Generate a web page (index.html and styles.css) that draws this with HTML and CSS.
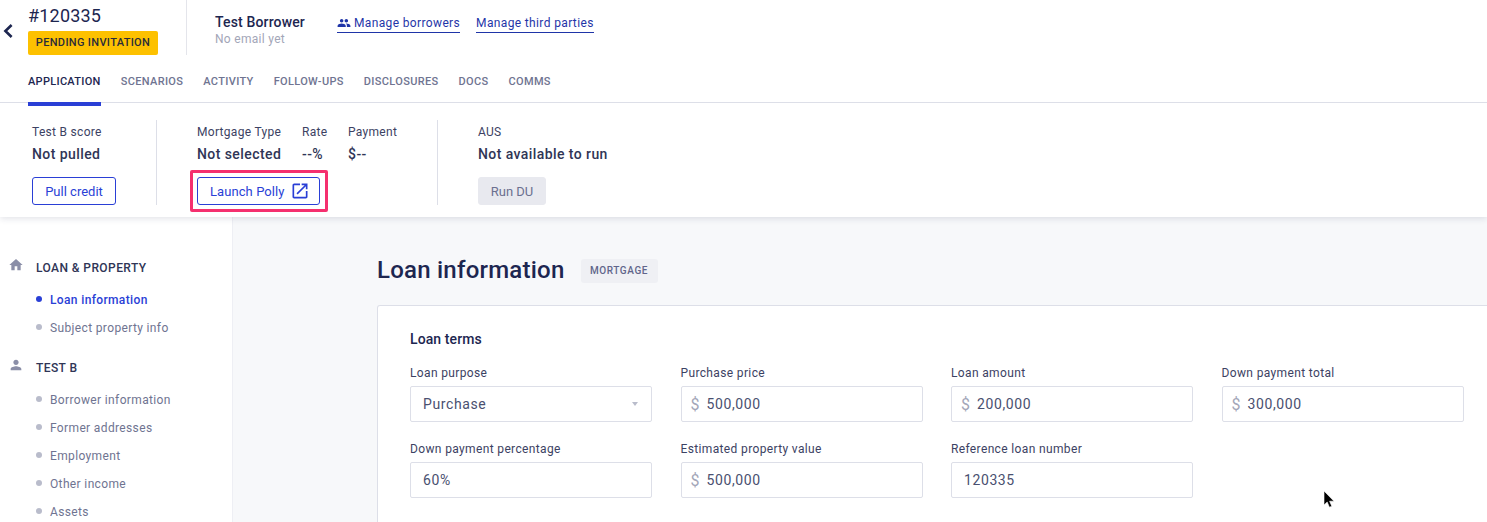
FILE: index.html
```html
<!DOCTYPE html>
<html>
	<head>
		<meta charset="utf-8">
		<title>Loan information</title>
		<link rel="stylesheet" href="styles.css">
	</head>
	<body>
		<header class="topbar">
			<div class="topRow">
				<a class="back">
					<svg viewBox="0 0 10 14" width="10" height="14"><path d="M8.6 1 2.4 7l6.2 6" fill="none" stroke="#1d2650" stroke-width="2.6"/></svg>
				</a>
				<div class="loanId">
					<div class="loanNum">#120335</div>
					<span class="status">PENDING INVITATION</span>
				</div>
				<div class="borrower">
					<div class="borrowerName">Test Borrower</div>
					<div class="borrowerMail">No email yet</div>
				</div>
				<a class="manage">
					<svg viewBox="0 0 24 24" width="14" height="14"><path fill="#1f35a8" d="M16 11c1.66 0 2.99-1.34 2.99-3S17.66 5 16 5c-1.66 0-3 1.34-3 3s1.34 3 3 3zm-8 0c1.66 0 2.99-1.34 2.99-3S9.66 5 8 5C6.34 5 5 6.34 5 8s1.34 3 3 3zm0 2c-2.33 0-7 1.17-7 3.5V19h14v-2.5c0-2.33-4.67-3.5-7-3.5zm8 0c-.29 0-.62.02-.97.05 1.16.84 1.97 1.97 1.97 3.45V19h6v-2.5c0-2.33-4.67-3.5-7-3.5z"/></svg>
					Manage borrowers
				</a>
				<a class="manage">Manage third parties</a>
			</div>
			<ul class="tabs">
				<li class="tab active">APPLICATION</li>
				<li class="tab">SCENARIOS</li>
				<li class="tab">ACTIVITY</li>
				<li class="tab">FOLLOW-UPS</li>
				<li class="tab">DISCLOSURES</li>
				<li class="tab">DOCS</li>
				<li class="tab">COMMS</li>
			</ul>
		</header>

		<section class="summary">
			<div class="group groupCredit">
				<div class="stats">
					<div class="stat"><div class="statLabel">Test B score</div><div class="statValue">Not pulled</div></div>
				</div>
				<button type="button" class="btn">Pull credit</button>
			</div>
			<div class="group groupMortgage">
				<div class="stats">
					<div class="stat statType"><div class="statLabel">Mortgage Type</div><div class="statValue">Not selected</div></div>
					<div class="stat statRate"><div class="statLabel">Rate</div><div class="statValue">--%</div></div>
					<div class="stat"><div class="statLabel">Payment</div><div class="statValue">$--</div></div>
				</div>
				<button type="button" class="btn btnPolly">
					Launch Polly
					<svg viewBox="0 0 24 24" width="20" height="20"><path fill="#2a3fd6" d="M19 19H5V5h7V3H5c-1.11 0-2 .9-2 2v14c0 1.1.89 2 2 2h14c1.1 0 2-.9 2-2v-7h-2v7zM14 3v2h3.59l-9.83 9.83 1.41 1.41L19 6.41V10h2V3h-7z"/></svg>
				</button>
			</div>
			<div class="group groupAus">
				<div class="stats">
					<div class="stat"><div class="statLabel">AUS</div><div class="statValue">Not available to run</div></div>
				</div>
				<button type="button" class="btn btnOff">Run DU</button>
			</div>
		</section>

		<div class="content">
			<nav class="sidebar">
				<div class="navHead">
					<svg viewBox="0 0 24 24" width="16" height="16"><path fill="#8b8fa8" d="M10 20v-6h4v6h5v-8h3L12 3 2 12h3v8z"/></svg>
					LOAN &amp; PROPERTY
				</div>
				<ul class="navList">
					<li class="navItem current">Loan information</li>
					<li class="navItem">Subject property info</li>
				</ul>
				<div class="navHead">
					<svg viewBox="0 0 24 24" width="16" height="16"><path fill="#8b8fa8" d="M12 12c2.21 0 4-1.79 4-4s-1.79-4-4-4-4 1.79-4 4 1.79 4 4 4zm0 2c-2.67 0-8 1.34-8 4v2h16v-2c0-2.66-5.33-4-8-4z"/></svg>
					TEST B
				</div>
				<ul class="navList">
					<li class="navItem">Borrower information</li>
					<li class="navItem">Former addresses</li>
					<li class="navItem">Employment</li>
					<li class="navItem">Other income</li>
					<li class="navItem">Assets</li>
				</ul>
			</nav>
			<main class="main">
				<div class="titleRow">
					<h1 class="title">Loan information</h1>
					<span class="tag">MORTGAGE</span>
				</div>
				<div class="card">
					<h2 class="cardTitle">Loan terms</h2>
					<div class="fields">
						<div class="field">
							<label class="fieldLabel">Loan purpose</label>
							<div class="input select">Purchase<span class="caret"></span></div>
						</div>
						<div class="field">
							<label class="fieldLabel">Purchase price</label>
							<div class="input money"><span class="dollar">$</span>500,000</div>
						</div>
						<div class="field">
							<label class="fieldLabel">Loan amount</label>
							<div class="input money"><span class="dollar">$</span>200,000</div>
						</div>
						<div class="field">
							<label class="fieldLabel">Down payment total</label>
							<div class="input money"><span class="dollar">$</span>300,000</div>
						</div>
						<div class="field">
							<label class="fieldLabel">Down payment percentage</label>
							<div class="input">60%</div>
						</div>
						<div class="field">
							<label class="fieldLabel">Estimated property value</label>
							<div class="input money"><span class="dollar">$</span>500,000</div>
						</div>
						<div class="field">
							<label class="fieldLabel">Reference loan number</label>
							<div class="input">120335</div>
						</div>
					</div>
				</div>
			</main>
		</div>

		<svg class="cursor" viewBox="0 0 12 19" width="12" height="19"><path d="M1 1v14l3.2-3 2.2 5.2 2.4-1-2.2-5H11z" fill="#000" stroke="#fff" stroke-width=".6"/></svg>
	</body>
</html>
```

FILE: styles.css
```css
*{
	margin: 0;
	padding: 0;
	box-sizing: border-box;
}
html, body{
	height: 522px;
	overflow: hidden;
}
body{
	position: relative;
	font-family: Roboto, "Liberation Sans", sans-serif;
	color: #1d2650;
	background-color: #fff;
}
ul{
	list-style: none;
}

/* top bar */
.topbar{
	position: relative;
	z-index: 3;
	height: 103px;
	border-bottom: 1px solid #dddfe8;
	background-color: #fff;
}
.topRow{
	height: 70px;
	display: flex;
	align-items: flex-start;
}
.back{
	width: 28px;
	padding: 24px 0 0 3px;
	line-height: 0;
}
.loanId{
	width: 159px;
	height: 55px;
	padding-top: 5px;
	margin-right: 28px;
	border-right: 1px solid #e4e5eb;
}
.loanNum{
	font-size: 18px;
	line-height: 21px;
	letter-spacing: 0.2px;
}
.status{
	display: inline-block;
	width: 130px;
	height: 24px;
	margin-top: 5px;
	line-height: 24px;
	text-align: center;
	font-size: 11px;
	font-weight: 500;
	letter-spacing: 0.33px;
	color: #2a2c3a;
	background-color: #fdc100;
	border-radius: 2px;
}
.borrower{
	width: 122px;
	padding-top: 14px;
}
.borrowerName{
	font-size: 14px;
	line-height: 17px;
	font-weight: 500;
	letter-spacing: 0.15px;
}
.borrowerMail{
	margin-top: 1px;
	font-size: 12px;
	line-height: 15px;
	letter-spacing: 0.3px;
	color: #a3a6b8;
}
.manage{
	display: flex;
	align-items: center;
	gap: 3px;
	height: 19px;
	margin-top: 14px;
	margin-right: 16px;
	font-size: 12px;
	letter-spacing: 0.36px;
	color: #1f35a8;
	border-bottom: 1px solid #1f35a8;
}
.tabs{
	display: flex;
	gap: 20px;
	padding-left: 28px;
}
.tab{
	height: 36px;
	padding-top: 5px;
	font-size: 11px;
	line-height: 13px;
	font-weight: 500;
	letter-spacing: 0.34px;
	color: #6f7491;
}
.active{
	color: #1d2650;
	letter-spacing: 0.3px;
	border-bottom: 4px solid #2a3fd6;
}

/* summary bar */
.summary{
	position: relative;
	z-index: 2;
	height: 114px;
	padding-top: 17px;
	display: flex;
	background-color: #fff;
	box-shadow: 0 2px 6px rgba(29, 38, 80, 0.12);
}
.group{
	height: 85px;
	padding-top: 5px;
	border-right: 1px solid #dddfe8;
}
.groupCredit{
	width: 157px;
	padding-left: 32px;
}
.groupMortgage{
	width: 281px;
	padding-left: 40px;
}
.groupAus{
	padding-left: 40px;
	border-right: 0;
}
.stats{
	display: flex;
}
.statType{
	width: 105px;
}
.statRate{
	width: 46px;
}
.statLabel{
	font-size: 12px;
	line-height: 15px;
	letter-spacing: 0.3px;
	color: #3c4263;
}
.statValue{
	margin-top: 6px;
	font-size: 14px;
	line-height: 16px;
	font-weight: 500;
	letter-spacing: 0.42px;
	color: #2f3556;
}
.btn{
	display: flex;
	align-items: center;
	justify-content: center;
	height: 28px;
	width: 84px;
	margin-top: 15px;
	font-family: inherit;
	font-size: 13px;
	color: #2a3fd6;
	background-color: #fff;
	border: 1px solid #2a3fd6;
	border-radius: 3px;
}
.btnPolly{
	position: relative;
	justify-content: flex-start;
	width: 123px;
	padding-left: 12px;
	gap: 5px;
	letter-spacing: 0.08px;
}
.btnPolly::after{
	content: "";
	position: absolute;
	left: -8px;
	right: -9px;
	top: -8px;
	bottom: -8px;
	border: 3px solid #f5306f;
	border-radius: 2px;
}
.btnOff{
	width: 68px;
	color: #6b7090;
	background-color: #e8e9ef;
	border-color: #e8e9ef;
}

/* lower part */
.content{
	display: flex;
	height: 305px;
	overflow: hidden;
}
.sidebar{
	width: 233px;
	padding-top: 39px;
	background-color: #fff;
	border-right: 1px solid #eeeff4;
}
.navHead{
	position: relative;
	height: 24px;
	padding-left: 36px;
	font-size: 12px;
	line-height: 24px;
	font-weight: 500;
	letter-spacing: 0.42px;
	color: #2f3556;
}
.navHead svg{
	position: absolute;
	left: 8px;
	top: 1px;
}
.navList{
	padding: 6px 0 14px 36px;
}
.navItem{
	position: relative;
	height: 28px;
	padding-left: 14px;
	font-size: 12px;
	line-height: 28px;
	letter-spacing: 0.36px;
	color: #6f7491;
}
.navItem::before{
	content: "";
	position: absolute;
	left: 0;
	top: 10px;
	width: 6px;
	height: 6px;
	border-radius: 50%;
	background-color: #b9bccb;
}
.current{
	font-weight: 500;
	color: #2a3fd6;
}
.current::before{
	background-color: #2a3fd6;
}
.main{
	flex: 1;
	padding: 39px 0 0 144px;
	background-color: #f7f8fa;
	min-width: 0;
}
.titleRow{
	display: flex;
	align-items: center;
	gap: 16px;
	height: 28px;
}
.title{
	font-size: 24px;
	line-height: 28px;
	font-weight: 500;
	letter-spacing: 0.23px;
}
.tag{
	width: 77px;
	height: 24px;
	margin-top: 2px;
	line-height: 24px;
	text-align: center;
	font-size: 10px;
	font-weight: 500;
	letter-spacing: 0.6px;
	color: #60658a;
	background-color: #eff0f4;
	border-radius: 3px;
}
.card{
	width: 1130px;
	height: 217px;
	margin-top: 21px;
	padding: 25px 0 0 32px;
	background-color: #fff;
	border: 1px solid #dddfe8;
	border-bottom: 0;
	border-radius: 3px 3px 0 0;
}
.cardTitle{
	font-size: 14px;
	line-height: 16px;
	font-weight: 500;
	letter-spacing: 0.1px;
}
.fields{
	display: grid;
	grid-template-columns: repeat(4, 242px);
	column-gap: 28.5px;
	row-gap: 20px;
	margin-top: 19px;
}
.fieldLabel{
	display: block;
	height: 15px;
	margin-bottom: 5px;
	font-size: 12px;
	line-height: 15px;
	letter-spacing: 0.36px;
	color: #3c4263;
}
.input{
	display: flex;
	align-items: center;
	height: 36px;
	padding-left: 12px;
	font-size: 14px;
	letter-spacing: 0.6px;
	color: #4a5070;
	background-color: #fff;
	border: 1px solid #dddfe8;
	border-radius: 2px;
}
.money{
	padding-left: 9px;
}
.dollar{
	width: 16px;
	font-size: 16px;
	color: #a3a6b8;
}
.select{
	position: relative;
}
.caret{
	position: absolute;
	right: 13px;
	top: 15px;
	border-left: 3.5px solid transparent;
	border-right: 3.5px solid transparent;
	border-top: 4px solid #b9bccb;
}
.cursor{
	position: absolute;
	left: 1323px;
	top: 490px;
	z-index: 5;
}
```
